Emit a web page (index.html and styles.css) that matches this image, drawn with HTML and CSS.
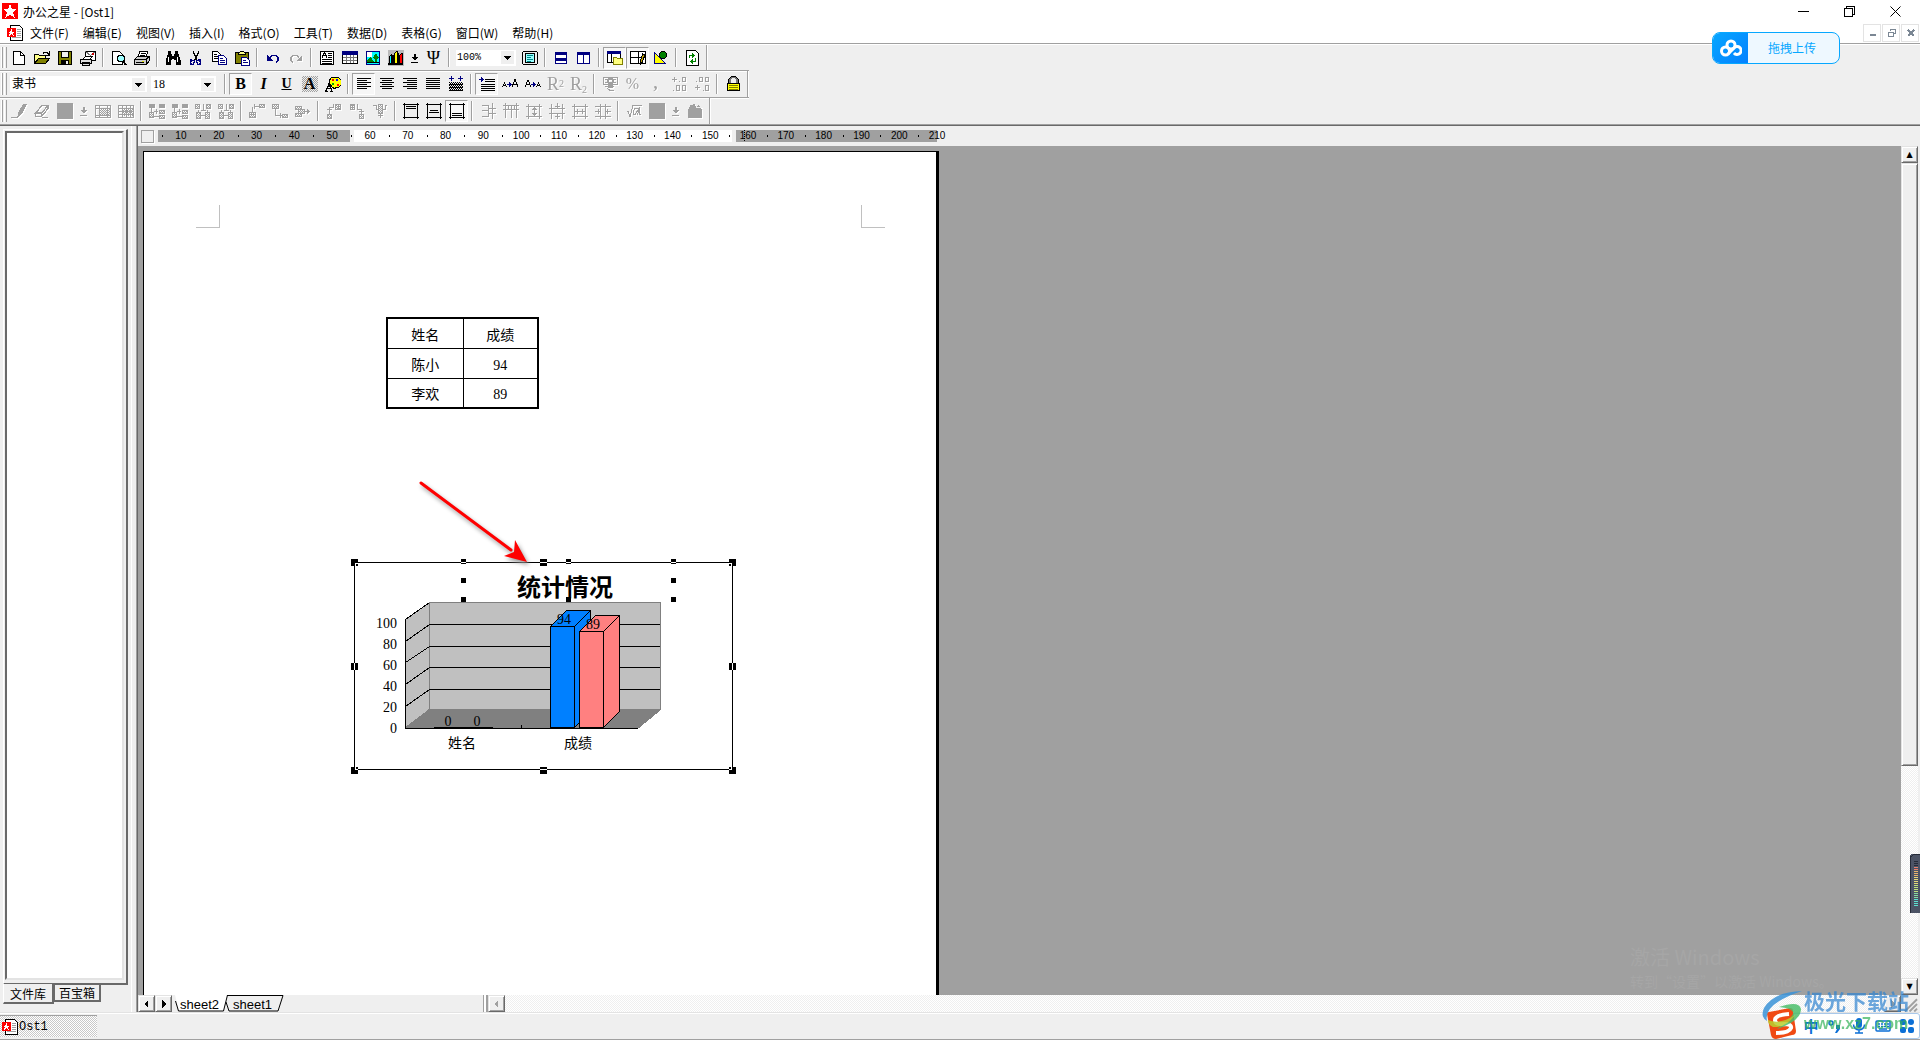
FILE: index.html
```
<!DOCTYPE html>
<html lang="zh-CN">
<head>
<meta charset="utf-8">
<title>办公之星 - [Ost1]</title>
<link rel="stylesheet" href="styles.css">
</head>
<body>
<svg class="sprite" aria-hidden="true">
  <defs>
    <pattern id="dots" width="2" height="2" patternUnits="userSpaceOnUse"><path d="M0 0h1v1H0zM1 1h1v1H1z" fill="#a0a0a0" stroke="none"/></pattern>
  </defs>
  <symbol id="app" viewBox="0 0 16 16"><path fill="#f00" d="M0 0h16v16H0z"/><path fill="#fff" d="M8 1l2 5h5l-4 3.500L13 15l-5-3.500L3 15l2-5.500L1 6h5z"/></symbol>
  <symbol id="doc" viewBox="0 0 16 16"><path fill="#fff" stroke="#000" d="M3.500.5h9l3 3v12h-12z"/><path stroke="#a0a0a0" d="M10 4.500h4M10 6.500h4M10 8.500h4M10 10.500h4M5 12.500h9"/><path fill="#f00" d="M0 3h9v9H0z"/><path fill="#fff" d="M4.500 4l1 2.500H8L6 8l1 3-2.500-2L2 11l1-3-2-1.500h2.500z"/></symbol>
  <symbol id="new" viewBox="0 0 16 16"><path fill="#fff" stroke="#000" d="M2.500 1.500h7l4 4v9h-11z"/><path stroke="#000" d="M9.500 1.500v4h4"/></symbol>
  <symbol id="open" viewBox="0 0 16 16"><path fill="#ff8" stroke="#000" d="M.5 13.500v-9h4l1 1h6v2"/><path fill="#808000" stroke="#000" d="M.5 13.500l4-5h11l-4 5z"/><path stroke="#000" d="M9 3.500l1-1h3l2 2M15.500 1v4h-4"/></symbol>
  <symbol id="save" viewBox="0 0 16 16"><path fill="#808000" stroke="#000" d="M1.500 1.500h13v13h-13z"/><path fill="#efefef" stroke="#000" d="M4.500 1.500h7v6h-7z"/><path fill="#000" d="M4 10h8v5H4z"/><path fill="#efefef" d="M9 11h2v3H9z"/></symbol>
  <symbol id="mail" viewBox="0 0 16 16"><path fill="#fff" stroke="#000" d="M5.500 6V1.500h10V10H12"/><path stroke="#777" d="M5.500 1.500l5 4 5-4"/><path fill="#c00" d="M12 3h2v2h-2z"/><path fill="#fff" stroke="#000" d="M3.500 9l2-3h7l-2 3"/><path fill="#ddd" stroke="#000" d="M.5 9.500h11v4h-11zM2.500 12.500h7v3h-7z"/></symbol>
  <symbol id="preview" viewBox="0 0 16 16"><path fill="#fff" stroke="#000" d="M1.500 14.500V1.500h7l3 3v10z"/><circle cx="10" cy="8.500" r="3.500" fill="#a0ffff" stroke="#000"/><path stroke="#000" stroke-width="2" d="M12 11l3 4"/></symbol>
  <symbol id="print" viewBox="0 0 16 16"><path fill="#fff" stroke="#000" d="M4 7l2-6h8l-2 6z"/><path stroke="#000" d="M7 3.500h5M6 5.500h5"/><path fill="#ccc" stroke="#000" d="M.5 9.500l3-3h12v4l-3 4H.5z"/><path stroke="#000" d="M1 9.500h11v5M12 9.500l3-3M2 12.500h8"/><path fill="#e0e000" d="M8 11h2v1H8z"/></symbol>
  <symbol id="find" viewBox="0 0 16 16"><path fill="#000" d="M3 1h3v3h1v2h2V4h1V1h3v3l1 1 2 6v4h-5v-5H9V9H7v1H6v5H1v-4L2 5l1-1z"/><path stroke="#fff" d="M3.500 7v5M12.500 7v5"/></symbol>
  <symbol id="cut" viewBox="0 0 16 16"><path stroke="#000" stroke-width="1.300" d="M5 1l4 9M11 1L7 10"/><path stroke="#000080" stroke-width="1.400" d="M6.500 10.500L3 10l-.5 4 3 .5zM8.500 10.500l3.500-.5.500 4-3 .5z"/></symbol>
  <symbol id="copy" viewBox="0 0 16 16"><path fill="#fff" stroke="#000" d="M1.500 1.500h5l3 3v7h-8z"/><path stroke="#000" d="M3 4.500h3M3 6.500h4M3 8.500h4"/><path fill="#fff" stroke="#000080" d="M7.500 5.500h5l3 3v6h-8z"/><path stroke="#000080" d="M9 8.500h3M9 10.500h5M9 12.500h5"/></symbol>
  <symbol id="paste" viewBox="0 0 16 16"><path fill="#808000" stroke="#000" d="M1.500 2.500h13v11h-13z"/><path fill="#ff8" stroke="#000" d="M4.500 3.500l2-2h3l2 2v1h-7z"/><path fill="#fff" stroke="#000080" d="M7.500 7.500h5l3 3v5h-8z"/><path stroke="#000080" d="M9 10.500h3M9 12.500h5"/></symbol>
  <symbol id="undo" viewBox="0 0 16 16"><path stroke="#000080" stroke-width="1.400" d="M5 7.500l2-2h4l2 2v3l-2 2"/><path fill="#000080" d="M2 5v6h6z"/></symbol>
  <symbol id="redo" viewBox="0 0 16 16"><path stroke="#a0a0a0" stroke-width="1.400" d="M11 7.500l-2-2H5l-2 2v3l2 2"/><path fill="#a0a0a0" d="M14 5v6H8z"/></symbol>
  <symbol id="frame" viewBox="0 0 16 16"><path fill="#fff" stroke="#000" d="M1.500 1.500h13v13h-13z"/><path stroke="#000" d="M3 7.500l2.500-5 2.500 5M4 5.500h3M9 3.500h4M9 5.500h4M9 7.500h4M3 9.500h10M3 11.500h10M3 13h10"/></symbol>
  <symbol id="table" viewBox="0 0 16 16"><path fill="#fff" stroke="#000" d="M.5 1.500h15v12H.5z"/><path fill="#000080" d="M0 1h16v4H0z"/><path stroke="#777" d="M1 7.500h14M1 10.500h14M4.500 5v8M8.500 5v8M11.500 5v8"/></symbol>
  <symbol id="picture" viewBox="0 0 16 16"><path fill="#0ff" stroke="#000080" d="M1.500 1.500h13v13h-13z"/><path fill="#fff" d="M2 2h5v5H2z"/><path fill="#008000" d="M11 3l3 5-2 1v3h-2V9L8 8zM2 10l4-3 3 5H2z"/><path stroke="#000" d="M2 12.500h12"/></symbol>
  <symbol id="chart" viewBox="0 0 16 16"><path fill="#bbb" d="M0 0h16v16H0z"/><path fill="#0ff" stroke="#000" d="M1.500 6.500l2-2v9h-2z"/><path fill="#ff0" stroke="#000" d="M6.500 3.500l2-2h1v12h-3z"/><path fill="#f00" stroke="#000" d="M11.500 5.500l2-2h1v10h-3z"/><path stroke="#000" stroke-width="2" d="M0 14h15M5 5v9M10 3v11"/></symbol>
  <symbol id="down" viewBox="0 0 7 16"><path fill="currentColor" d="M2.500 4h2v3H7L3.500 10.500 0 7h2.500zM0 12h7v1H0z"/></symbol>
  <symbol id="zoom-page" viewBox="0 0 16 16"><rect x=".5" y="1.500" width="15" height="13" rx="2" fill="#efefef" stroke="#000"/><path fill="#9ff" stroke="#000" d="M3.500 3.500h9v9h-9z"/><path stroke="#088" d="M5 5.500h6M5 7.500h4M5 9.500h6M5 11h4"/></symbol>
  <symbol id="split-h" viewBox="0 0 16 16"><path fill="#fff" stroke="#000080" d="M2.500 2.500h11v11h-11z"/><path fill="#000080" d="M2 2h12v3H2zM2 8h12v3H2z"/></symbol>
  <symbol id="split-v" viewBox="0 0 16 16"><path fill="#fff" stroke="#000080" d="M1.500 2.500h12v11h-12zM7.500 3v11"/><path fill="#000080" d="M1 2h13v3H1z"/></symbol>
  <symbol id="library" viewBox="0 0 16 16"><path fill="#fff" stroke="#000" d="M.5 1.500h13v11H.5z"/><path fill="#000080" d="M0 1h14v3H0z"/><path stroke="#000" d="M4.500 4v9"/><path fill="#ffff80" stroke="#808000" d="M6.500 14.500v-7h3l1 1h5v6z"/></symbol>
  <symbol id="draw-table" viewBox="0 0 16 16"><path fill="#fff" stroke="#000" d="M.5 1.500h15v12H.5zM8.500 2v11M1 7.500h14"/><path fill="#c0a000" stroke="#000" d="M10.500 11l2-7 2 1-2 7-2 2z"/></symbol>
  <symbol id="shapes" viewBox="0 0 16 16"><path fill="#ff0" stroke="#000080" d="M1.500 2.500l11 11h-11z"/><circle cx="10" cy="5" r="3.500" fill="#008000" stroke="#000"/></symbol>
  <symbol id="refresh" viewBox="0 0 16 16"><path fill="#fff" stroke="#000" d="M2.500.5h9l3 3v12h-12z"/><path stroke="#008000" d="M5.500 8V5.500H9M11.500 8v3.500H8"/><path fill="#008000" d="M8 3l3 2.500L8 8zM9 9v5l-3-2.500z"/></symbol>
  <symbol id="palette" viewBox="0 0 16 16"><path fill="#ff0" stroke="#000" d="M5 8l-1-3 3-4h6l3 3v5l-3 3-2-1-1 2-3-2z"/><path fill="#f00" d="M7 3h2v2H7zM12 8h2v2h-2z"/><path fill="#00f" d="M11 3h2v2h-2z"/><path fill="#0a0" d="M7 7h2v2H7z"/><path stroke="#000" stroke-width="1.300" d="M0 15.500h3M1 15l3-7 3 7M2 12.500h4M5 15.500h3"/></symbol>
  <symbol id="left" viewBox="0 0 16 16"><path stroke="#000" d="M1 2.500h14M1 4.500h10M1 6.500h14M1 8.500h10M1 10.500h14M1 12.500h10"/></symbol>
  <symbol id="center" viewBox="0 0 16 16"><path stroke="#000" d="M1 2.500h14M3 4.500h10M1 6.500h14M3 8.500h10M1 10.500h14M3 12.500h10"/></symbol>
  <symbol id="right" viewBox="0 0 16 16"><path stroke="#000" d="M1 2.500h14M5 4.500h10M1 6.500h14M5 8.500h10M1 10.500h14M5 12.500h10"/></symbol>
  <symbol id="justify" viewBox="0 0 16 16"><path stroke="#000" d="M1 2.500h14M1 4.500h14M1 6.500h14M1 8.500h14M1 10.500h14M1 12.500h14"/></symbol>
  <symbol id="distribute" viewBox="0 0 16 16"><path stroke="#000080" d="M1 2.500h5M10 2.500h5M3.500 0v5M12.500 0v5"/><path stroke="#000" stroke-dasharray="1 1" d="M1 6.500h14M2 7.500h14M1 9.500h14M2 10.500h14M1 12.500h14M2 13.500h14"/><path stroke="#000" d="M1 8.500h14M1 11.500h14M1 14.500h14"/></symbol>
  <symbol id="indent" viewBox="0 0 16 16"><path stroke="#000080" d="M0 3.500h5M2.500 1v5M3.500 2v3"/><path stroke="#000" d="M6 3.500h10M6 5.500h10M2 8.500h14M2 10.500h14M2 12.500h14M2 14.500h14"/></symbol>
  <symbol id="grow" viewBox="0 0 16 16"><path stroke="#000" d="M.5 11l2-4 2 4M1 9.500h3M10 11l3-8 3 8M11 8.500h4"/><path stroke="#000080" d="M5 8.500h5M7.500 6v5M8.500 7v3"/></symbol>
  <symbol id="shrink" viewBox="0 0 16 16"><path stroke="#000" d="M0 11l3-7 3 7M1 8.500h4M11.500 11l2-4 2 4M12 9.500h3"/><path stroke="#000080" d="M6 8.500h5M8.500 6v5M9.500 7v3"/></symbol>
  <symbol id="money" viewBox="0 0 16 16"><path stroke="currentColor" d="M1.500 1.500h14v7h-14zM3 10.500h9M5 12l3 2.500h4"/><path fill="currentColor" d="M3 3h3v1H3zM11 3h3v1h-3zM3 6h3v1H3zM11 6h3v1h-3zM6 9h5v3H6z"/><circle cx="8.500" cy="5" r="2.500" stroke="currentColor" stroke-width="2"/></symbol>
  <symbol id="dec-add" viewBox="0 0 16 16"><path stroke="currentColor" d="M1 3.500h5M3.500 1v5M8 5.500h1M11.500 1.500h3v4h-3zM2 14.500h1M5.500 9.500h3v5h-3zM11.500 9.500h3v5h-3z"/></symbol>
  <symbol id="dec-sub" viewBox="0 0 16 16"><path stroke="currentColor" d="M2 5.500h1M5.500 1.500h3v4h-3zM11.500 1.500h3v4h-3zM1 11.500h5M3.500 9v5M9 14.500h1M11.500 9.500h3v5h-3z"/></symbol>
  <symbol id="lock" viewBox="0 0 16 16"><path stroke="#777" stroke-width="2" d="M5 7V3l2-2h3l2 2v4"/><path stroke="#000" d="M3.500 7V3.500l3-3h4l3 3V7"/><path fill="#ff0" stroke="#000" d="M2.500 7.500h12v7h-12z"/><path stroke="#808000" d="M4 9.500h9M4 11.500h9M4 13.500h9"/></symbol>
  <symbol id="pen" viewBox="0 0 16 16"><path stroke="currentColor" d="M0 14.500h6l3-3"/><path fill="currentColor" d="M12 1h4l-4 8-4 4-1-3z"/></symbol>
  <symbol id="eraser" viewBox="0 0 16 16"><path stroke="currentColor" stroke-width="1.300" d="M1.500 10L8 2.500h6L7.500 10zM1.500 10v3.500h6l6.500-8v-3M7.500 10v3.500M8 14.500h6"/></symbol>
  <symbol id="block" viewBox="0 0 16 16"><path fill="currentColor" d="M0 0h16v16H0z"/></symbol>
  <symbol id="grid-a" viewBox="0 0 16 16"><path fill="url(#dots)" stroke="currentColor" d="M4.500 5.500h11v7h-11z"/><path stroke="currentColor" d="M.5 2.500h15v12H.5zM1 5.500h15M1 12.500h15M4.500 3v11M12.500 3v11"/></symbol>
  <symbol id="grid-b" viewBox="0 0 16 16"><path fill="url(#dots)" d="M4 5h12v8H4z"/><path stroke="currentColor" d="M.5 2.500h15v12H.5zM1 5.500h15M1 8.500h15M1 11.500h15M4.500 3v11M8.500 3v11M12.500 3v11"/></symbol>
  <symbol id="merge-a" viewBox="0 0 16 16"><path fill="currentColor" d="M0 1h6v4H0zM10 1h6v4h-6z"/><path fill="url(#dots)" stroke="currentColor" d="M.5 9.500h4v5h-4zM10.500 7.500h5v3h-5zM10.500 12.500h5v3h-5z"/><path stroke="currentColor" d="M2.500 5v4M5 8.500h4M7.500 6v5M10 13.500H4"/></symbol>
  <symbol id="merge-b" viewBox="0 0 16 16"><path fill="url(#dots)" stroke="currentColor" d="M.5 1.500h4v4h-4zM11.500 1.500h4v4h-4zM1.500 9.500h4v6h-4zM10.500 9.500h4v6h-4z"/><path stroke="currentColor" d="M8.500 1v6M6 7.500h5M3.500 7v2M12.500 7v2M5 12.500h6"/></symbol>
  <symbol id="ins-a" viewBox="0 0 16 16"><path fill="url(#dots)" stroke="currentColor" d="M10.500 1.500h5v3h-5zM.5 9.500h6v5h-6z"/><path stroke="currentColor" d="M10 3.500H5M3.500 9V3.500M5.500 1v5M1 11.500h5"/></symbol>
  <symbol id="ins-b" viewBox="0 0 16 16"><path fill="url(#dots)" stroke="currentColor" d="M.5 1.500h6v4h-6zM10.500 11.500h5v3h-5z"/><path stroke="currentColor" d="M3.500 6v6.500H10M8.500 10v5"/></symbol>
  <symbol id="ins-c" viewBox="0 0 16 16"><path fill="url(#dots)" stroke="currentColor" d="M.5 3.500h6v3h-6zM.5 10.500h6v3h-6zM3.500 6.500h6v4h-6z"/><path stroke="currentColor" d="M9 8.500h6M12.500 6v5M13.500 7v3"/></symbol>
  <symbol id="ins-d" viewBox="0 0 16 16"><path fill="url(#dots)" stroke="currentColor" d="M9.500 1.500h5v5h-5zM1.500 11.500h4v4h-4z"/><path stroke="currentColor" d="M3.500 11V4M1 6.500h5M3.500 4.500H7V1M12.500 1v6"/></symbol>
  <symbol id="ins-e" viewBox="0 0 16 16"><path fill="url(#dots)" stroke="currentColor" d="M1.500 1.500h4v5h-4zM10.500 11.500h4v4h-4z"/><path stroke="currentColor" d="M8.500 1v5.500h4V11M10 8.500h5M3.500 1v5"/></symbol>
  <symbol id="ins-f" viewBox="0 0 16 16"><path fill="url(#dots)" stroke="currentColor" d="M6.500 1.500h4v9h-4z"/><path stroke="currentColor" d="M1 2.500h3v4h3M15 2.500h-2v4h-3M8.500 11v4M6 12.500h5"/></symbol>
  <symbol id="v-top" viewBox="0 0 16 16"><path stroke="#000" d="M0 1.500h16M0 14.500h16M1.500 0v16M14.500 0v16M3 3.500h10M3 5.500h10"/></symbol>
  <symbol id="v-mid" viewBox="0 0 16 16"><path stroke="#000" d="M0 1.500h16M0 14.500h16M1.500 0v16M14.500 0v16M4 7.500h8M3 9.500h10"/></symbol>
  <symbol id="v-bot" viewBox="0 0 16 16"><path stroke="#000" d="M0 1.500h16M0 14.500h16M1.500 0v16M14.500 0v16M3 10.500h10M3 12.500h10"/></symbol>
  <symbol id="rows" viewBox="0 0 16 16"><path stroke="currentColor" d="M2 2.500h6M2 7.500h6M2 13.500h6M8.500 2v12M12.500 0v16M9 5.500h7M9 10.500h7"/></symbol>
  <symbol id="cols" viewBox="0 0 16 16"><path stroke="currentColor" d="M0 2.500h16M0 6.500h16M2.500 0v15M8.500 2v13M13.500 0v15M5.500 2v5M11.500 2v5"/></symbol>
  <symbol id="fit-h" viewBox="0 0 16 16"><path stroke="currentColor" d="M0 3.500h16M0 13.500h16M2.500 1v15M13.500 1v15M8.500 4v9M6 6.500h5M6 10.500h5M7 5.500h3M7 11.500h3"/></symbol>
  <symbol id="fit-v" viewBox="0 0 16 16"><path stroke="currentColor" d="M0 5.500h16M0 10.500h16M2.500 1v15M13.500 1v15M8.500 0v5M8.500 11v5M6 3.500h5M6 13.500h5"/></symbol>
  <symbol id="fit-w" viewBox="0 0 16 16"><path stroke="currentColor" d="M0 3.500h16M0 13.500h16M2.500 1v15M13.500 1v15M3 8.500h10M5.500 6v5M10.500 6v5"/></symbol>
  <symbol id="fit-c" viewBox="0 0 16 16"><path stroke="currentColor" d="M0 3.500h16M0 13.500h16M5.500 1v15M10.500 1v15M0 8.500h5M11 8.500h5M3.500 6v5M12.500 6v5"/></symbol>
  <symbol id="root" viewBox="0 0 16 16"><path stroke="currentColor" d="M1 9l1-1 2 6 3-11.500h9M14 5l-3 7M12 5.500H9l-2 3v3h2l4-6v6h2"/></symbol>
  <symbol id="box" viewBox="0 0 16 16"><path fill="currentColor" d="M1 6h14v9H1zM3 2l5-1 1 3 3-2 2 4H2z"/><path stroke="#efefef" d="M9 4.500h6"/></symbol>
  <symbol id="tri" viewBox="0 0 13 13"><path fill="#efefef" d="M0 0h13v13H0z"/><path fill="#000" d="M3 5h7v1H9v1H8v1H7v1H6V8H5V7H4V6H3z"/></symbol>
</svg>

<header class="titlebar">
  <svg class="ico"><use href="#app"/></svg>
  <h1>办公之星 - [Ost1]</h1>
  <div class="winbtns">
    <button aria-label="最小化"><svg viewBox="0 0 11 11"><path stroke="#000" d="M0 5.500h11"/></svg></button>
    <button aria-label="还原"><svg viewBox="0 0 11 11"><path stroke="#000" d="M.5 2.500h8v8h-8zM2.500 2V.5h8v8H9"/></svg></button>
    <button aria-label="关闭"><svg class="smooth" viewBox="0 0 11 11"><path stroke="#000" d="M.5.500l10 10M10.500.5l-10 10"/></svg></button>
  </div>
</header>

<nav class="menubar">
  <svg class="ico"><use href="#doc"/></svg>
  <button>文件(F)</button><button>编辑(E)</button><button>视图(V)</button><button>插入(I)</button><button>格式(O)</button><button>工具(T)</button><button>数据(D)</button><button>表格(G)</button><button>窗口(W)</button><button>帮助(H)</button>
  <div class="mdi">
    <button aria-label="最小化文档"><svg viewBox="0 0 9 9"><path fill="#7b8794" d="M2 6h6v2H2z"/></svg></button>
    <button aria-label="还原文档"><svg viewBox="0 0 9 9"><path stroke="#7b8794" d="M1.500 4.500h5v4h-5zM1 4h6M3.500 3V1.500h5v4H7M3 1h6"/></svg></button>
    <button aria-label="关闭文档"><svg viewBox="0 0 9 9"><path stroke="#7b8794" stroke-width="2" d="M2 2l6 6M8 2L2 8"/></svg></button>
  </div>
</nav>

<section class="toolbars">
  <div class="bar first">
    <i class="grip"></i>
    <button aria-label="新建"><svg><use href="#new"/></svg></button>
    <button aria-label="打开"><svg><use href="#open"/></svg></button>
    <button aria-label="保存"><svg><use href="#save"/></svg></button>
    <button aria-label="邮件"><svg><use href="#mail"/></svg></button>
    <i class="sep"></i>
    <button aria-label="预览"><svg><use href="#preview"/></svg></button>
    <button aria-label="打印"><svg><use href="#print"/></svg></button>
    <i class="sep"></i>
    <button aria-label="查找"><svg><use href="#find"/></svg></button>
    <button aria-label="剪切"><svg><use href="#cut"/></svg></button>
    <button aria-label="复制"><svg><use href="#copy"/></svg></button>
    <button aria-label="粘贴"><svg><use href="#paste"/></svg></button>
    <i class="sep"></i>
    <button aria-label="撤销"><svg><use href="#undo"/></svg></button>
    <button aria-label="重做" class="off"><svg><use href="#redo"/></svg></button>
    <i class="sep"></i>
    <button aria-label="文本框"><svg><use href="#frame"/></svg></button>
    <button aria-label="表格"><svg><use href="#table"/></svg></button>
    <button aria-label="图片"><svg><use href="#picture"/></svg></button>
    <button aria-label="图表"><svg><use href="#chart"/></svg></button>
    <button aria-label="更多" class="narrow"><svg><use href="#down"/></svg></button>
    <button aria-label="符号" class="psi">Ψ</button>
    <i class="sep"></i>
    <span class="combo zoom"><select aria-label="显示比例"><option>100%</option></select><svg><use href="#tri"/></svg></span>
    <button aria-label="全屏"><svg><use href="#zoom-page"/></svg></button>
    <i class="sep"></i>
    <button aria-label="水平平铺"><svg><use href="#split-h"/></svg></button>
    <button aria-label="垂直平铺"><svg><use href="#split-v"/></svg></button>
    <i class="sep"></i>
    <button aria-label="文件库" class="on"><svg><use href="#library"/></svg></button>
    <button aria-label="绘制表格" class="on"><svg><use href="#draw-table"/></svg></button>
    <button aria-label="图形"><svg><use href="#shapes"/></svg></button>
    <i class="sep"></i>
    <button aria-label="刷新"><svg><use href="#refresh"/></svg></button>
    <i class="sep"></i>
  </div>
  <div class="bar lined">
    <i class="grip"></i>
    <span class="combo font"><select aria-label="字体"><option>隶书</option></select><svg><use href="#tri"/></svg></span>
    <span class="combo size"><select aria-label="字号"><option>18</option></select><svg><use href="#tri"/></svg></span>
    <i class="sep"></i>
    <button class="on glyph"><b>B</b></button>
    <button class="glyph"><em>I</em></button>
    <button class="glyph"><u>U</u></button>
    <button class="glyph"><span class="shaded">A</span></button>
    <button aria-label="颜色"><svg><use href="#palette"/></svg></button>
    <i class="sep"></i>
    <button aria-label="左对齐" class="on"><svg><use href="#left"/></svg></button>
    <button aria-label="居中"><svg><use href="#center"/></svg></button>
    <button aria-label="右对齐"><svg><use href="#right"/></svg></button>
    <button aria-label="两端对齐"><svg><use href="#justify"/></svg></button>
    <button aria-label="分散对齐"><svg><use href="#distribute"/></svg></button>
    <i class="sep"></i>
    <button aria-label="缩进" class="on"><svg><use href="#indent"/></svg></button>
    <button aria-label="增大字距"><svg><use href="#grow"/></svg></button>
    <button aria-label="减小字距"><svg><use href="#shrink"/></svg></button>
    <button class="off script">R<sup>2</sup></button>
    <button class="off script">R<sub>2</sub></button>
    <i class="sep"></i>
    <button aria-label="货币" class="off"><svg><use href="#money"/></svg></button>
    <button class="off glyph">%</button>
    <button class="off glyph"><b>,</b></button>
    <button aria-label="增加小数位" class="off"><svg><use href="#dec-add"/></svg></button>
    <button aria-label="减少小数位" class="off"><svg><use href="#dec-sub"/></svg></button>
    <i class="sep"></i>
    <button aria-label="锁定"><svg><use href="#lock"/></svg></button>
    <i class="sep"></i>
  </div>
  <div class="bar">
    <i class="grip"></i>
    <button aria-label="画笔" class="off"><svg><use href="#pen"/></svg></button>
    <button aria-label="橡皮" class="off"><svg><use href="#eraser"/></svg></button>
    <button aria-label="底色" class="off"><svg><use href="#block"/></svg></button>
    <button aria-label="更多底色" class="off narrow"><svg><use href="#down"/></svg></button>
    <button aria-label="内框" class="off"><svg><use href="#grid-a"/></svg></button>
    <button aria-label="网格" class="off"><svg><use href="#grid-b"/></svg></button>
    <i class="sep"></i>
    <button aria-label="合并" class="off"><svg><use href="#merge-a"/></svg></button>
    <button aria-label="拆分" class="off"><svg><use href="#merge-a"/></svg></button>
    <button aria-label="列合并" class="off"><svg><use href="#merge-b"/></svg></button>
    <button aria-label="列拆分" class="off"><svg><use href="#merge-b"/></svg></button>
    <i class="sep"></i>
    <button aria-label="插入行" class="off"><svg><use href="#ins-a"/></svg></button>
    <button aria-label="追加行" class="off"><svg><use href="#ins-b"/></svg></button>
    <button aria-label="删除行" class="off"><svg><use href="#ins-c"/></svg></button>
    <i class="sep"></i>
    <button aria-label="插入列" class="off"><svg><use href="#ins-d"/></svg></button>
    <button aria-label="追加列" class="off"><svg><use href="#ins-e"/></svg></button>
    <button aria-label="删除列" class="off"><svg><use href="#ins-f"/></svg></button>
    <i class="sep"></i>
    <button aria-label="顶端对齐"><svg><use href="#v-top"/></svg></button>
    <button aria-label="垂直居中"><svg><use href="#v-mid"/></svg></button>
    <button aria-label="底端对齐" class="on"><svg><use href="#v-bot"/></svg></button>
    <i class="sep"></i>
    <button aria-label="平均行高" class="off"><svg><use href="#rows"/></svg></button>
    <button aria-label="平均列宽" class="off"><svg><use href="#cols"/></svg></button>
    <button aria-label="增高" class="off"><svg><use href="#fit-h"/></svg></button>
    <button aria-label="减高" class="off"><svg><use href="#fit-v"/></svg></button>
    <button aria-label="增宽" class="off"><svg><use href="#fit-w"/></svg></button>
    <button aria-label="减宽" class="off"><svg><use href="#fit-c"/></svg></button>
    <i class="sep"></i>
    <button aria-label="公式" class="off"><svg><use href="#root"/></svg></button>
    <button aria-label="前景" class="off"><svg><use href="#block"/></svg></button>
    <button aria-label="更多前景" class="off narrow"><svg><use href="#down"/></svg></button>
    <button aria-label="工具箱" class="off"><svg><use href="#box"/></svg></button>
    <i class="sep"></i>
  </div>
</section>

<main class="work">
  <aside class="side">
    <div class="side-frame"><div class="side-list"></div></div>
    <div class="side-tabs"><button class="active">文件库</button><button>百宝箱</button></div>
  </aside>
  <section class="editor">
    <div class="ruler">
      <i class="corner"></i>
      <ol><li>10</li><li>20</li><li>30</li><li>40</li><li>50</li><li>60</li><li>70</li><li>80</li><li>90</li><li>100</li><li>110</li><li>120</li><li>130</li><li>140</li><li>150</li><li class="mark">160</li><li>170</li><li>180</li><li>190</li><li>200</li><li>210</li></ol>
    </div>
    <div class="view">
      <div class="canvas">
        <article class="page">
          <div class="margins"><i></i><i></i></div>
          <table class="scores">
            <tr><th>姓名</th><th>成绩</th></tr>
            <tr><td>陈小</td><td>94</td></tr>
            <tr><td>李欢</td><td>89</td></tr>
          </table>
          <svg class="plot" viewBox="0 0 386 216" role="img" aria-label="统计情况">
            <path fill="none" stroke="#000" d="M4.500 4.500h378v207H4.500z"/>
            <path fill="#c0c0c0" stroke="#808080" d="M79.500 44.500h231v107h-231zM55.500 61.500l24-17v107l-24 18z"/>
            <path fill="#808080" d="M55 170l24-19h232v1l-22 18z"/>
            <path stroke="#000" fill="none" d="M79.500 44.500l-24 17v109h232M310 66.500H79.500l-24 17M310 88.500H79.500l-24 16M310 109.500H79.500l-24 17M310 131.500H79.500l-24 17M171.500 167v3M84 169.500h59"/>
            <path fill="#0080ff" stroke="#000" d="M200.500 68.500l16-16h24v102l-16 15h-24zM200.500 68.500h24v101M224.500 68.500l16-16"/>
            <path fill="#ff8080" stroke="#000" d="M229.500 73.500l16-16h24v96l-16 16h-24zM229.500 73.500h24v96M253.500 73.500l16-16"/>
            <g class="labels">
              <text x="47" y="70" text-anchor="end">100</text><text x="47" y="91" text-anchor="end">80</text><text x="47" y="112" text-anchor="end">60</text><text x="47" y="133" text-anchor="end">40</text><text x="47" y="154" text-anchor="end">20</text><text x="47" y="175" text-anchor="end">0</text>
              <text x="98" y="168" text-anchor="middle">0</text><text x="127" y="168" text-anchor="middle">0</text>
              <text x="214" y="66" text-anchor="middle">94</text><text x="243" y="71" text-anchor="middle">89</text>
              <text x="112" y="190" text-anchor="middle">姓名</text><text x="228" y="190" text-anchor="middle">成绩</text>
              <text class="plot-title" x="215" y="38" text-anchor="middle">统计情况</text>
            </g>
            <path fill="#000" d="M1 1h7v7H1zM190 1h7v7h-7zM379 1h7v7h-7zM1 105h7v7H1zM379 105h7v7h-7zM1 209h7v7H1zM190 209h7v7h-7zM379 209h7v7h-7zM111 1h5v5h-5zM216 1h5v5h-5zM321 1h5v5h-5zM111 20h5v5h-5zM321 20h5v5h-5zM111 39h5v5h-5zM216 39h5v5h-5zM321 39h5v5h-5z"/>
            <path stroke="#fff" fill="none" d="M8 5.500H5.500V8M190 4.500h7M379 5.500h2.500V8M4.500 105v7M382.500 105v7M5.500 209v2.500H8M190 211.500h7M381.500 209v2.500H379M111 4.500h5M216 4.500h5M321 4.500h5"/>
          </svg>
          <svg class="pointer" viewBox="0 0 120 95"><path stroke="#f00" stroke-width="3" stroke-linecap="round" d="M7 8l90 67"/><path fill="#f00" d="M113 87l-23-6 10-4 1-12z"/></svg>
        </article>
      </div>
      <div class="vscroll"><button aria-label="向上">▲</button><i class="thumb"></i><span></span><button aria-label="向下">▼</button></div>
    </div>
    <div class="tabstrip">
      <button class="arrow" aria-label="上一张"><svg viewBox="0 0 14 14"><path fill="#000" d="M8 3v8L4 7z"/></svg></button>
      <button class="arrow" aria-label="下一张"><svg viewBox="0 0 14 14"><path fill="#000" d="M5 3v8l4-4z"/></svg></button>
      <div class="sheets">
        <svg viewBox="0 0 112 17"><path fill="#fff" d="M1 0l4 16h44l5-16z"/><path stroke="#000" d="M1.500 6l3 10h45l4-16M53 .5h56l-5 15.500H55l-3-9"/></svg>
        <button>sheet2</button><button>sheet1</button>
      </div>
      <i class="split"></i>
      <button class="arrow" aria-label="向左"><svg viewBox="0 0 14 14"><path fill="#a0a0a0" d="M8 3v8L4 7z"/></svg></button>
      <i class="track"></i>
      <button class="arrow" aria-label="向右"><svg viewBox="0 0 14 14"><path fill="#a0a0a0" d="M5 3v8l4-4z"/></svg></button>
      <svg class="sizer" viewBox="0 0 18 17"><path stroke="#a0a0a0" stroke-width="2" d="M4 17L17 4M9 17l8-8M14 17l3-3"/></svg>
    </div>
  </section>
</main>

<footer class="status"><button><svg><use href="#doc"/></svg>Ost1</button></footer>

<button class="upload"><span><svg viewBox="0 0 22 18"><g fill="none" stroke="#fff" stroke-width="3"><circle cx="11" cy="6" r="4"/><circle cx="5.500" cy="12" r="4"/><path d="M8 15l6-6a4 4 0 1 1 0 5"/></g></svg></span>拖拽上传</button>

<div class="activate"><p>激活 Windows</p><p>转到“设置”以激活 Windows。</p></div>

<svg class="meter" viewBox="0 0 10 59"><rect width="14" height="59" rx="3" fill="#4c5365"/><path stroke="#262b38" d="M.5 59V3l3-2.500H10M4 7.500h4M4 9.500h4M4 11.500h4"/><path stroke="#e8806c" d="M4 13.500h4M4 15.500h4"/><path stroke="#e8b56c" d="M4 17.500h4M4 19.500h4M4 21.500h4"/><path stroke="#e6d878" d="M4 23.500h4M4 25.500h4M4 27.500h4M4 29.500h4"/><path stroke="#bfe07c" d="M4 31.500h4M4 33.500h4M4 35.500h4M4 37.500h4"/><path stroke="#88dca0" d="M4 39.500h4M4 41.500h4M4 43.500h4"/><path stroke="#5ce0d0" d="M4 45.500h4M4 47.500h4M4 49.500h4M4 51.500h4"/></svg>

<div class="ime">
  <button>中</button>
  <button aria-label="标点"><svg viewBox="0 0 16 16"><circle cx="4" cy="5" r="2" stroke-width="1.500"/><path fill="currentColor" stroke="none" d="M9 7h4v4l-3 4H8l2-4H9z"/></svg></button>
  <button aria-label="语音"><svg viewBox="0 0 16 16"><rect x="5" y="0" width="6" height="10" rx="3" fill="currentColor" stroke="none"/><path stroke-width="1.500" d="M2.500 6.500a5.500 5.500 0 0 0 11 0M8 12v3M4 15h8"/></svg></button>
  <button aria-label="键盘"><svg viewBox="0 0 16 16"><rect x="1" y="3" width="14" height="10" rx="1" stroke-width="1.500"/><path stroke-width="1.500" stroke-dasharray="2 1" d="M3 6h11M3 8.500h11"/><path stroke-width="1.500" d="M4 11h8"/></svg></button>
  <button aria-label="工具箱"><svg viewBox="0 0 16 16"><g fill="currentColor" stroke="none"><rect x="1" y="1" width="6" height="6" rx="2"/><circle cx="12" cy="4" r="3"/><rect x="1" y="9" width="6" height="6" rx="2"/><rect x="9" y="9" width="6" height="6" rx="2"/></g></svg></button>
</div>
<svg class="sogou" viewBox="0 0 46 50"><path fill="#f04a14" d="M6 24q0-2 2-2l21-4q3 0 3 3l3 20q0 4-4 4l-16 4q-4 0-5-4z"/><path fill="none" stroke="#fff" stroke-width="4" d="M28 24q-14 1-14 6t9 4q8 0 7 4-2 5-15 5"/><g opacity=".85"><path fill="#3a93d8" d="M41 1Q12 2 3 18q-4 9 3 13Q2 14 41 1z"/><path fill="#4cbf6c" d="M18 17q20-7 22 2 0 12-24 20 18-13 16-17-2-4-14-5z"/><path fill="#b9cf2e" d="M7 30q12 5 27-5-9 13-22 12-5-2-5-7z"/></g></svg>
<div class="site"><b>极光下载站</b><b>www.xz7.com</b></div>
</body>
</html>
```
FILE: styles.css
```
* { box-sizing: border-box; }
body {
  margin: 0; height: 100vh; overflow: hidden; position: relative;
  display: flex; flex-direction: column;
  background: #efefef; color: #000;
  font: 12px/16px "Noto Sans CJK SC", sans-serif;
}
button { appearance: none; border: 0; padding: 0; background: none; color: inherit; font: inherit; }
svg { display: block; fill: none; shape-rendering: crispEdges; }
i { display: block; }
.sprite { position: absolute; width: 0; height: 0; }
.ico { width: 16px; height: 16px; flex: none; }

.titlebar { height: 22px; background: #fff; display: flex; align-items: center; padding: 0 19px 0 2px; gap: 5px; }
.titlebar h1 { margin: 0; font-size: 12px; font-weight: 400; flex: 1; padding-top: 1px; }
.winbtns { display: flex; gap: 35px; }
.winbtns svg { width: 11px; height: 11px; }
.smooth { shape-rendering: auto; }

.menubar { height: 22px; background: #fff; border-bottom: 1px solid #a0a0a0; display: flex; align-items: center; padding: 0 1px 0 7px; }
.menubar > button { padding: 0 7px; }
.mdi { margin-left: auto; display: flex; gap: 1px; }
.mdi button { width: 18px; height: 18px; border: 1px solid #e3e3e3; display: grid; place-items: center; }
.mdi svg { width: 9px; height: 9px; }

.toolbars { border-bottom: 1px solid #a0a0a0; border-top: 1px solid #fff; display: flex; flex-direction: column; align-items: flex-start; }
.bar { height: 26px; display: flex; align-items: center; }
.bar.first { height: 25px; }
.bar.lined { height: 28px; border: solid #a0a0a0; border-width: 1px 0; box-shadow: inset 0 1px #fff, 0 1px #fff; }
.grip { width: 7px; align-self: stretch; margin: 2px 0; background: linear-gradient(90deg, #efefef 1px, #fff 1px 2px, #a0a0a0 2px 3px, #efefef 3px 4px, #fff 4px 5px, #efefef 5px 6px, #a0a0a0 6px); }
.sep { width: 8px; align-self: stretch; margin: 3px 0; background: linear-gradient(90deg, transparent 3px, #a0a0a0 3px 4px, #fff 4px 5px, transparent 5px); }
.sep:last-child { margin: 0; width: 5px; }
.bar button { width: 23px; height: 22px; display: grid; place-items: center; }
.bar button svg { width: 16px; height: 16px; }
.bar button.narrow { width: 15px; }
.bar button.narrow svg { width: 7px; }
.bar button.on { border: 1px solid; border-color: #a0a0a0 #fff #fff #a0a0a0; background: #f7f7f7; }
.bar button.off { color: #a0a0a0; filter: drop-shadow(1px 1px 0 #fff); }
.bar .psi { font: 18px/20px "Liberation Serif", serif; }
.bar .glyph { font: 16px/18px "Liberation Serif", serif; }
.glyph em { font-weight: 700; }
.glyph u { font-weight: 700; font-size: 14px; }
.glyph .shaded { font-weight: 700; width: 16px; height: 16px; line-height: 16px; background: repeating-conic-gradient(#a0a0a0 0 25%, #efefef 0 50%) 0 0 / 2px 2px; }
.bar .script { font: 18px/20px "Liberation Serif", serif; display: flex; justify-content: center; }
.script sup, .script sub { font-size: 10px; line-height: 10px; }
.script sub { align-self: end; }

.combo { display: grid; height: 16px; background: #fff; }
.combo select { grid-area: 1 / 1; appearance: none; border: 0; outline: 0; padding: 0 2px; background: none; color: #000; font: 12px/16px "Liberation Serif", "Noto Sans CJK SC", serif; }
.combo svg { grid-area: 1 / 1; justify-self: end; align-self: center; width: 13px; height: 13px; pointer-events: none; margin-right: 2px; }
.combo.font { width: 137px; margin: 0 4px 0 3px; }
.combo.size { width: 65px; margin-right: 5px; }
.combo.zoom { width: 60px; margin: 0 2px 0 3px; }
.combo.zoom select { font: 10px/16px "Liberation Mono", monospace; padding: 0 1px; }

.work { flex: 1; min-height: 0; display: grid; grid-template-columns: 137px 1fr; border-top: 1px solid #696969; }
.side { display: flex; flex-direction: column; padding: 3px 8px 8px 3px; border-right: 1px solid #a0a0a0; box-shadow: inset -4px 0 #efefef, inset -5px 0 #fff; min-height: 0; }
.side-frame { flex: 1; border: solid; border-width: 1px 2px 2px 1px; border-color: #fff #696969 #696969 #fff; padding: 1px 2px 3px 1px; display: flex; }
.side-list { flex: 1; background: #fff; border: 2px solid; border-color: #696969 #e3e3e3 #e3e3e3 #696969; }
.side-tabs { display: flex; align-items: flex-start; }
.side-tabs button { height: 17px; width: 47px; border: solid #696969; border-width: 0 2px 2px 1px; line-height: 14px; }
.side-tabs .active { height: 20px; width: 51px; border-left-color: #fff; margin-top: -1px; background: #efefef; line-height: 20px; }

.editor { display: flex; flex-direction: column; min-width: 0; min-height: 0; border-left: 1px solid #696969; margin-right: 2px; }
.ruler { height: 20px; display: flex; align-items: center; padding-left: 3px; }
.corner { width: 13px; height: 13px; border: 1px solid #a0a0a0; box-shadow: 1px 1px #fff; }
.ruler ol { list-style: none; margin: 0 0 0 4px; padding: 0 0 0 4px; width: 798px; height: 12px; display: grid; grid-template-columns: repeat(21, 1fr); text-align: center; font: 10px/12px "Liberation Sans", sans-serif; background: linear-gradient(90deg, #a0a0a0 192px, #efefef 192px 196px, #fff 196px 574px, #efefef 574px 578px, #a0a0a0 578px 779px, transparent 779px); }
.ruler li { background: linear-gradient(#000, #000) 0 5px / 1px 2px no-repeat; }
.ruler .mark { background: linear-gradient(#000, #000) 0 5px / 1px 2px no-repeat, repeating-linear-gradient(#000 0 1px, transparent 1px 2px) 15px 0 / 1px 100% no-repeat; }
.view { flex: 1; min-height: 0; display: flex; }
.canvas { flex: 1; background: #a0a0a0; overflow: hidden; padding: 5px 0 0 5px; }
.page { position: relative; width: 796px; height: 1123px; background: #fff; border: solid #000; border-width: 1px 3px 0 1px; display: flex; flex-direction: column; align-items: flex-start; }
.margins { width: 689px; height: 76px; margin-left: 52px; padding-top: 53px; display: flex; justify-content: space-between; }
.margins i { width: 24px; height: 23px; border: solid #c0c0c0; border-width: 0 1px 1px 0; }
.margins i + i { border-width: 0 0 1px 1px; }
.scores { margin: 89px 0 0 242px; border-collapse: collapse; border: 2px solid #000; font: 14px/20px "Liberation Serif", "Noto Sans CJK SC", serif; text-align: center; }
.scores th, .scores td { width: 76px; height: 30px; padding: 5px 0 0; font-weight: 400; border: 1px solid #000; }
.scores th:last-child, .scores td:last-child { width: 75px; }
.plot { width: 386px; height: 216px; margin: 149px 0 0 206px; }
.labels { fill: #000; font: 14px "Liberation Serif", "Noto Sans CJK SC", serif; }
.plot-title { font-size: 24px; font-weight: 700; }
.pointer { position: absolute; left: 270px; top: 323px; width: 120px; height: 95px; shape-rendering: auto; filter: drop-shadow(2px 3px 2px #999); }

.vscroll, .track { background: repeating-conic-gradient(#fff 0 25%, #efefef 0 50%) 0 0 / 2px 2px; }
.vscroll { width: 17px; display: flex; flex-direction: column; }
.vscroll button { height: 17px; font: 8px/12px "DejaVu Sans", sans-serif; }
.vscroll span { flex: 1; }
.thumb { height: 603px; }
.vscroll button, .thumb, .arrow { background: #efefef; border: 1px solid; border-color: #e3e3e3 #696969 #696969 #e3e3e3; box-shadow: inset 1px 1px #fff, inset -1px -1px #a0a0a0; }
.tabstrip { height: 17px; display: flex; }
.arrow { width: 17px; display: grid; place-items: center; }
.arrow svg { width: 14px; height: 14px; }
.sheets { width: 311px; display: flex; font: 13px/17px "Liberation Sans", sans-serif; padding-left: 8px; gap: 14px; position: relative; }
.sheets svg { position: absolute; left: 2px; top: 0; width: 112px; height: 17px; shape-rendering: auto; }
.sheets button { position: relative; padding-top: 2px; line-height: 15px; }
.split { width: 5px; border: solid #a0a0a0; border-width: 0 2px 0 1px; background: #fff; }
.track { flex: 1; }
.sizer { width: 17px; height: 17px; shape-rendering: auto; }

.status { height: 28px; border-top: 1px solid #e3e3e3; border-bottom: 1px solid #a0a0a0; padding: 2px 0; box-shadow: inset 0 1px #fff; }
.status button { width: 97px; height: 22px; padding: 0 2px; display: flex; align-items: center; gap: 1px; font: 12px/16px "Liberation Mono", monospace; background: repeating-conic-gradient(#fff 0 25%, #c8c8c8 0 50%) 0 0 / 2px 2px; border-top: 1px solid #a0a0a0; }
.status svg { width: 16px; height: 16px; }

.upload { position: absolute; right: 80px; top: 32px; width: 128px; height: 32px; border: 1px solid #06a7ff; border-radius: 8px; background: #eef8ff; color: #06a7ff; display: flex; align-items: center; gap: 20px; overflow: hidden; }
.upload span { width: 35px; height: 32px; background: linear-gradient(135deg, #06a7ff, #0580ff); display: grid; place-items: center; }
.upload svg { width: 22px; height: 18px; shape-rendering: auto; }
.activate { position: absolute; right: 90px; bottom: 49px; width: 200px; color: #a6a6a6; font-size: 14px; line-height: 20px; white-space: nowrap; }
.activate p { margin: 0; }
.activate p:first-child { font-size: 20px; line-height: 28px; }
.meter { position: absolute; right: 0; top: 854px; width: 10px; height: 59px; }
.ime { position: absolute; right: 0; bottom: 1px; width: 140px; height: 26px; background: #fff; border: 1px solid #a9c8ea; border-radius: 3px; color: #0b6fd6; display: flex; align-items: center; gap: 8px; justify-content: flex-end; padding-right: 4px; }
.ime button { width: 16px; font-weight: 700; font-size: 15px; }
.ime svg { width: 16px; height: 16px; stroke: currentColor; shape-rendering: auto; }
.sogou { position: absolute; right: 113px; bottom: 0; width: 46px; height: 50px; shape-rendering: auto; }
.site { position: absolute; right: 10px; bottom: 7px; width: 106px; color: #2f83d0; opacity: .7; font-size: 21px; line-height: 26px; white-space: nowrap; }
.site b { display: block; margin-bottom: 2px; }
.site b + b { margin: 0; color: #35b35a; font: 700 16px/18px "Liberation Sans", sans-serif; }
```
